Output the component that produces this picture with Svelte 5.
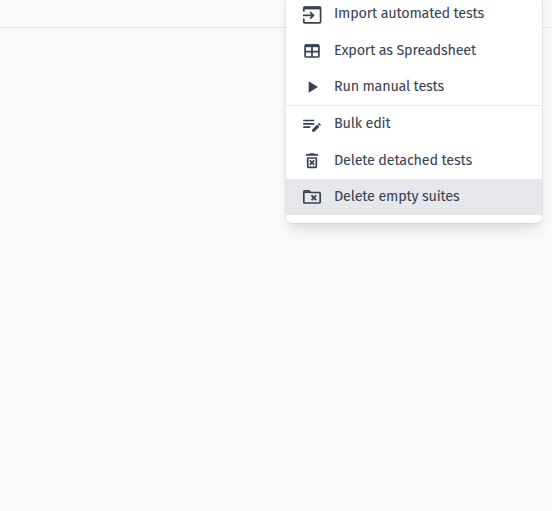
<script>
  const groups = [
    [
      { label: 'Import automated tests', icon: 'import', height: 37, width: 150, low: true },
      { label: 'Export as Spreadsheet', icon: 'table', height: 37, width: 142, low: true },
      { label: 'Run manual tests', icon: 'play', height: 36, width: 110 }
    ],
    [
      { label: 'Bulk edit', icon: 'edit', height: 37, width: 56.5 },
      { label: 'Delete detached tests', icon: 'trash', height: 36, width: 138 },
      { label: 'Delete empty suites', icon: 'folder', height: 36, width: 125.5, active: true }
    ]
  ];

  // Spread or tighten each label so that it fills its own width.
  function fit(node, width) {
    const natural = node.getBoundingClientRect().width;
    node.style.letterSpacing = `${(width - natural) / node.textContent.length}px`;
  }
</script>

<main class="page">
  <header class="topbar"></header>
  <div class="menu" role="menu">
    {#each groups as group}
      <div class="group">
        {#each group as item}
          <div class="item" class:active={item.active} role="menuitem" tabindex="-1" style:height="{item.height}px">
            <svg class="icon" width="20" height="20" viewBox="0 0 20 20" fill="none" stroke="currentColor" stroke-width="1.7">
              {#if item.icon === 'import'}
                <path d="M1.8 8.8V5.1q0-.9.9-.9h15q.9 0 .9.9v13.9q0 .9-.9.9h-15q-.9 0-.9-.9v-3.4M1 12.4h10M8.2 9.2l3.2 3.2-3.2 3.2" />
                <path d="M2 5h16.4" stroke-width="2.8" />
              {:else if item.icon === 'table'}
                <rect x="3.1" y="5" width="13.8" height="12" rx="1" />
                <path d="M3 5.8h14" stroke-width="2.8" />
                <path d="M3 11.7h14M10 6v11" />
              {:else if item.icon === 'play'}
                <path d="M6.7 4.3v11.4l9.2-5.7z" fill="currentColor" stroke="none" />
              {:else if item.icon === 'edit'}
                <path d="M1.2 6.5h11M1.2 9.8h11M1.2 13.2h7.1" />
                <path d="M10.2 15.5l5-5 2.2 2.2-5 5h-2.2zM15.8 9.9l.6-.6q.5-.5 1 0l1.2 1.2q.5.5 0 1l-.6.6z" fill="currentColor" stroke="none" />
              {:else if item.icon === 'trash'}
                <path d="M4 3.9h12M7.5 3h5M5.7 6.4v9.1q0 .8.8.8h7q.8 0 .8-.8V6.4M5 7h10M7.8 9.4l4.4 4.4M12.2 9.4l-4.4 4.4" />
              {:else}
                <path d="M1.8 4.7q0-.9.9-.9h4.2l1.8 1.7h8.6q.9 0 .9.9v8.7q0 .9-.9.9H2.7q-.9 0-.9-.9zM9.5 8.4l4.7 4.7M14.2 8.4l-4.7 4.7" />
                <path d="M2 4.8h5.6l1.2 1.2H2z" fill="currentColor" stroke="none" />
              {/if}
            </svg>
            <span class="label" class:low={item.low} use:fit={item.width}>{item.label}</span>
          </div>
        {/each}
      </div>
    {/each}
  </div>
</main>

<style>
  .page {
    position: relative;
    width: 552px;
    height: 511px;
    overflow: hidden;
    background: #f9fafb;
    font-family: 'Fira Sans', 'Noto Sans', sans-serif;
    color: #374151;
  }
  .topbar {
    box-sizing: border-box;
    height: 28px;
    border-bottom: 1px solid #e5e7eb;
  }
  .menu {
    position: absolute;
    top: -13px;
    right: 10px;
    width: 256px;
    box-sizing: border-box;
    padding: 8px 0;
    background: #fff;
    border-radius: 6px;
    box-shadow:
      0 0 0 1px rgba(0, 0, 0, 0.05),
      0 10px 15px -3px rgba(0, 0, 0, 0.1),
      0 4px 6px -2px rgba(0, 0, 0, 0.05);
  }
  .group + .group {
    border-top: 1px solid #e5e7eb;
  }
  .item {
    display: flex;
    align-items: flex-start;
    gap: 12px;
    box-sizing: border-box;
    padding: 8px 16px 0;
  }
  .active {
    background: #e5e7eb;
  }
  .icon {
    flex: none;
    overflow: visible;
  }
  .label {
    font-size: 14.4px;
    line-height: 19px;
    white-space: nowrap;
  }
  .low {
    padding-top: 1px;
  }
</style>
